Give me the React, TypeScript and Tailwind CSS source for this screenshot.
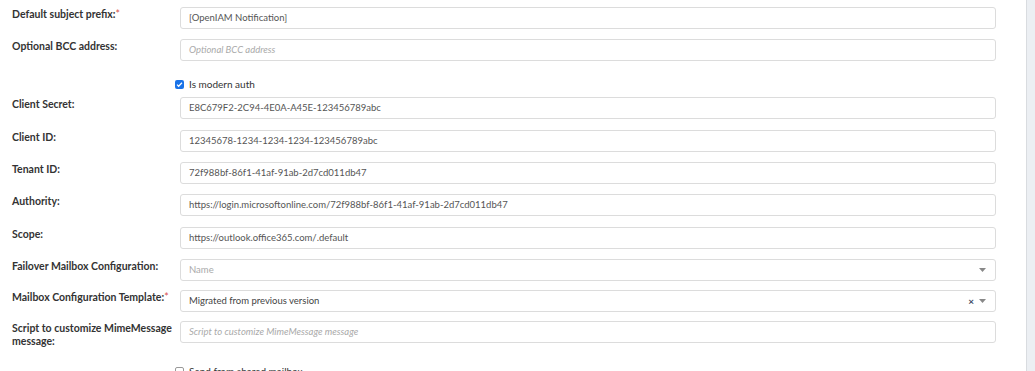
import React from "react";

type Field = {
  label: string;
  required?: boolean;
  value?: string;
  placeholder?: string;
  kind?: "input" | "select";
  clearable?: boolean;
  mt: string;
};

function Caret() {
  return (
    <svg width="7" height="4" viewBox="0 0 7 4" className="text-[#888]">
      <path d="M0 0h7L3.5 4z" fill="currentColor" />
    </svg>
  );
}

function Row({ f }: { f: Field }) {
  return (
    <div className={`flex ${f.mt}`}>
      <div className="w-[180px] shrink-0 pl-3 pr-[2px] pt-[1px] text-[10.5px] leading-[13px] font-bold text-[#333]">
        {f.label}
        {f.required && <span className="text-[#d9534f] font-normal">*</span>}
      </div>
      <div className="flex-1 h-[22px] flex items-center border border-[#dcdcdc] rounded-[3px] bg-white pl-2 pr-2 text-[9.5px]">
        {f.value ? (
          <span className={f.kind === "select" ? "text-[#444]" : "text-[#555]"}>{f.value}</span>
        ) : (
          <span className={f.kind === "select" ? "text-[#aaa]" : "text-[#aaa] italic"}>{f.placeholder}</span>
        )}
        {f.kind === "select" && (
          <div className="ml-auto flex items-center gap-[5px] pr-[1px]">
            {f.clearable && <span className="text-[#3c4a63] text-[10px] leading-none font-bold">×</span>}
            <Caret />
          </div>
        )}
      </div>
    </div>
  );
}

const top: Field[] = [
  { label: "Default subject prefix:", required: true, value: "[OpenIAM Notification]", mt: "mt-[7px]" },
  { label: "Optional BCC address:", placeholder: "Optional BCC address", mt: "mt-[10px]" },
];

const rest: Field[] = [
  { label: "Client Secret:", value: "E8C679F2-2C94-4E0A-A45E-123456789abc", mt: "mt-[5px]" },
  { label: "Client ID:", value: "12345678-1234-1234-1234-123456789abc", mt: "mt-[11px]" },
  { label: "Tenant ID:", value: "72f988bf-86f1-41af-91ab-2d7cd011db47", mt: "mt-[10px]" },
  { label: "Authority:", value: "https://login.microsoftonline.com/72f988bf-86f1-41af-91ab-2d7cd011db47", mt: "mt-[10px]" },
  { label: "Scope:", value: "https://outlook.office365.com/.default", mt: "mt-[11px]" },
  { label: "Failover Mailbox Configuration:", placeholder: "Name", kind: "select", mt: "mt-[10px]" },
  { label: "Mailbox Configuration Template:", required: true, value: "Migrated from previous version", kind: "select", clearable: true, mt: "mt-[9px]" },
  { label: "Script to customize MimeMessage message:", placeholder: "Script to customize MimeMessage message", mt: "mt-[9px]" },
];

export default function App() {
  return (
    <div className="flex h-[371px] overflow-hidden bg-white" style={{ fontFamily: "Lato, 'Noto Sans', sans-serif" }}>
      <div className="w-[1026px] shrink-0 pr-[30px]">
        {top.map((f) => (
          <Row key={f.label} f={f} />
        ))}
        <div className="flex items-center h-[16px] mt-[15px] pl-[175px]">
          <span className="w-[9px] h-[9px] rounded-[2px] bg-[#1a73e8] flex items-center justify-center">
            <svg width="7" height="7" viewBox="0 0 8 8">
              <path d="M1.2 4.2l1.8 1.8 3.8-4" stroke="white" strokeWidth="1.4" fill="none" />
            </svg>
          </span>
          <span className="ml-[5px] text-[10px] text-[#333]">Is modern auth</span>
        </div>
        {rest.map((f) => (
          <Row key={f.label} f={f} />
        ))}
        <div className="flex items-center h-[16px] mt-[15px] pl-[175px]">
          <span className="w-[9px] h-[9px] rounded-[2px] border border-[#999] bg-white" />
          <span className="ml-[5px] text-[10px] text-[#333]">Send from shared mailbox</span>
        </div>
      </div>
      <div className="flex-1 border-l border-[#d9dce0] bg-[#eceff3]" />
    </div>
  );
}
